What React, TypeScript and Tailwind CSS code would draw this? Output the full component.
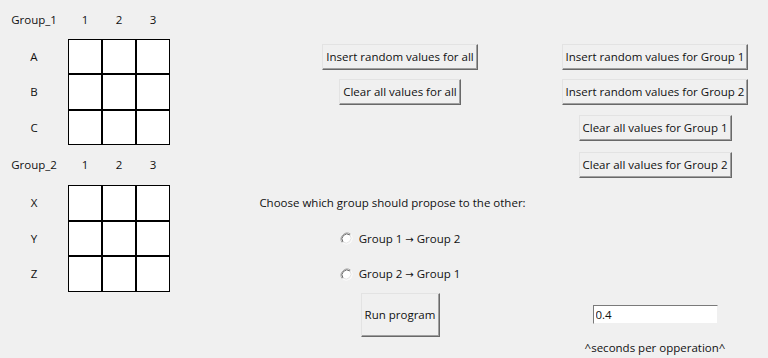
import React from "react";

const font = { fontFamily: '"Open Sans", "Noto Sans", sans-serif' };

const Btn = ({ children, className = "" }: { children: React.ReactNode; className?: string }) => (
  <button
    className={`bg-[#f0f0f0] text-[11.5px] text-[#111] whitespace-nowrap border border-t-[#e3e3e3] border-l-[#e3e3e3] border-r-[#696969] border-b-[#696969] shadow-[inset_-1px_-1px_0_#a0a0a0] ${className}`}
  >
    {children}
  </button>
);

const Arrow = () => (
  <span style={{ fontFamily: '"DejaVu Sans", sans-serif' }} className="text-[10px]">
    →
  </span>
);

const Radio = ({ a, b }: { a: string; b: string }) => (
  <label className="flex items-center gap-[6px] text-[11.5px] text-[#111] whitespace-nowrap">
    <svg width="13" height="13" viewBox="0 0 13 13">
      <circle cx="6.5" cy="6.5" r="6" fill="#fff" />
      <path d="M2.3 10.7 A6 6 0 0 1 10.7 2.3" fill="none" stroke="#a0a0a0" strokeWidth="1" />
      <path d="M3 10 A5 5 0 0 1 10 3" fill="none" stroke="#696969" strokeWidth="1" />
      <path d="M10.7 2.3 A6 6 0 0 1 2.3 10.7" fill="none" stroke="#f8f8f8" strokeWidth="1" />
      <path d="M10 3 A5 5 0 0 1 3 10" fill="none" stroke="#e3e3e3" strokeWidth="1" />
    </svg>
    <span>
      {a} <Arrow /> {b}
    </span>
  </label>
);

const Cell = ({ row, col }: { row: number; col: number }) => (
  <div
    className="bg-white border border-black"
    style={{ gridRow: row, gridColumn: col }}
  />
);

const Lbl = ({ children, row, col }: { children: React.ReactNode; row: number; col: number }) => (
  <div
    className="flex items-center justify-center text-[11.5px] text-[#111]"
    style={{ gridRow: row, gridColumn: col }}
  >
    {children}
  </div>
);

export default function App() {
  const g1 = ["A", "B", "C"];
  const g2 = ["X", "Y", "Z"];
  return (
    <div
      className="w-[768px] h-[358px] bg-[#f0f0f0] grid grid-cols-[68px_34px_34px_34px_66px_328px_182px_1fr] grid-rows-[39px_35px_36px_35px_40px_36px_35px_36px_45px_1fr] overflow-hidden"
      style={font}
    >
      {/* group 1 */}
      <Lbl row={1} col={1}>Group_1</Lbl>
      <Lbl row={1} col={2}>1</Lbl>
      <Lbl row={1} col={3}>2</Lbl>
      <Lbl row={1} col={4}>3</Lbl>
      {g1.map((r, i) => (
        <React.Fragment key={r}>
          <Lbl row={i + 2} col={1}>{r}</Lbl>
          {[2, 3, 4].map((c) => <Cell key={c} row={i + 2} col={c} />)}
        </React.Fragment>
      ))}

      {/* group 2 */}
      <Lbl row={5} col={1}>Group_2</Lbl>
      <Lbl row={5} col={2}>1</Lbl>
      <Lbl row={5} col={3}>2</Lbl>
      <Lbl row={5} col={4}>3</Lbl>
      {g2.map((r, i) => (
        <React.Fragment key={r}>
          <Lbl row={i + 6} col={1}>{r}</Lbl>
          {[2, 3, 4].map((c) => <Cell key={c} row={i + 6} col={c} />)}
        </React.Fragment>
      ))}

      {/* middle column */}
      <div className="row-start-2 col-start-6 flex items-center justify-center">
        <Btn className="h-[26px] px-[3px]">Insert random values for all</Btn>
      </div>
      <div className="row-start-3 col-start-6 flex items-center justify-center">
        <Btn className="h-[26px] px-[3px]">Clear all values for all</Btn>
      </div>
      <div className="row-start-6 col-start-5 col-span-2 flex items-center justify-center pl-[51px] text-[11.5px] text-[#111] whitespace-nowrap">
        Choose which group should propose to the other:
      </div>
      <div className="row-start-7 col-start-6 flex items-center justify-center">
        <Radio a="Group 1" b="Group 2" />
      </div>
      <div className="row-start-8 col-start-6 flex items-center justify-center">
        <Radio a="Group 2" b="Group 1" />
      </div>
      <div className="row-start-9 col-start-6 flex items-center justify-center">
        <Btn className="w-[79px] h-[44px]">Run program</Btn>
      </div>

      {/* right column */}
      <div className="row-start-2 col-start-7 flex items-center justify-center">
        <Btn className="h-[26px] px-[3px]">Insert random values for Group 1</Btn>
      </div>
      <div className="row-start-3 col-start-7 flex items-center justify-center">
        <Btn className="h-[26px] px-[3px]">Insert random values for Group 2</Btn>
      </div>
      <div className="row-start-4 col-start-7 flex items-center justify-center">
        <Btn className="h-[26px] px-[3px]">Clear all values for Group 1</Btn>
      </div>
      <div className="row-start-5 col-start-7 flex items-center justify-center">
        <Btn className="h-[26px] px-[3px]">Clear all values for Group 2</Btn>
      </div>
      <div className="row-start-9 col-start-7 flex items-center justify-center">
        <input
          defaultValue="0.4"
          className="w-[125px] h-[19px] bg-white px-[2px] text-[11.5px] text-[#111] border border-t-[#7a7a7a] border-l-[#7a7a7a] border-r-[#f0f0f0] border-b-[#f0f0f0] outline-none"
          style={font}
        />
      </div>
      <div className="row-start-10 col-start-7 flex items-center justify-center text-[11.5px] text-[#111] whitespace-nowrap">
        ^seconds per opperation^
      </div>
    </div>
  );
}
